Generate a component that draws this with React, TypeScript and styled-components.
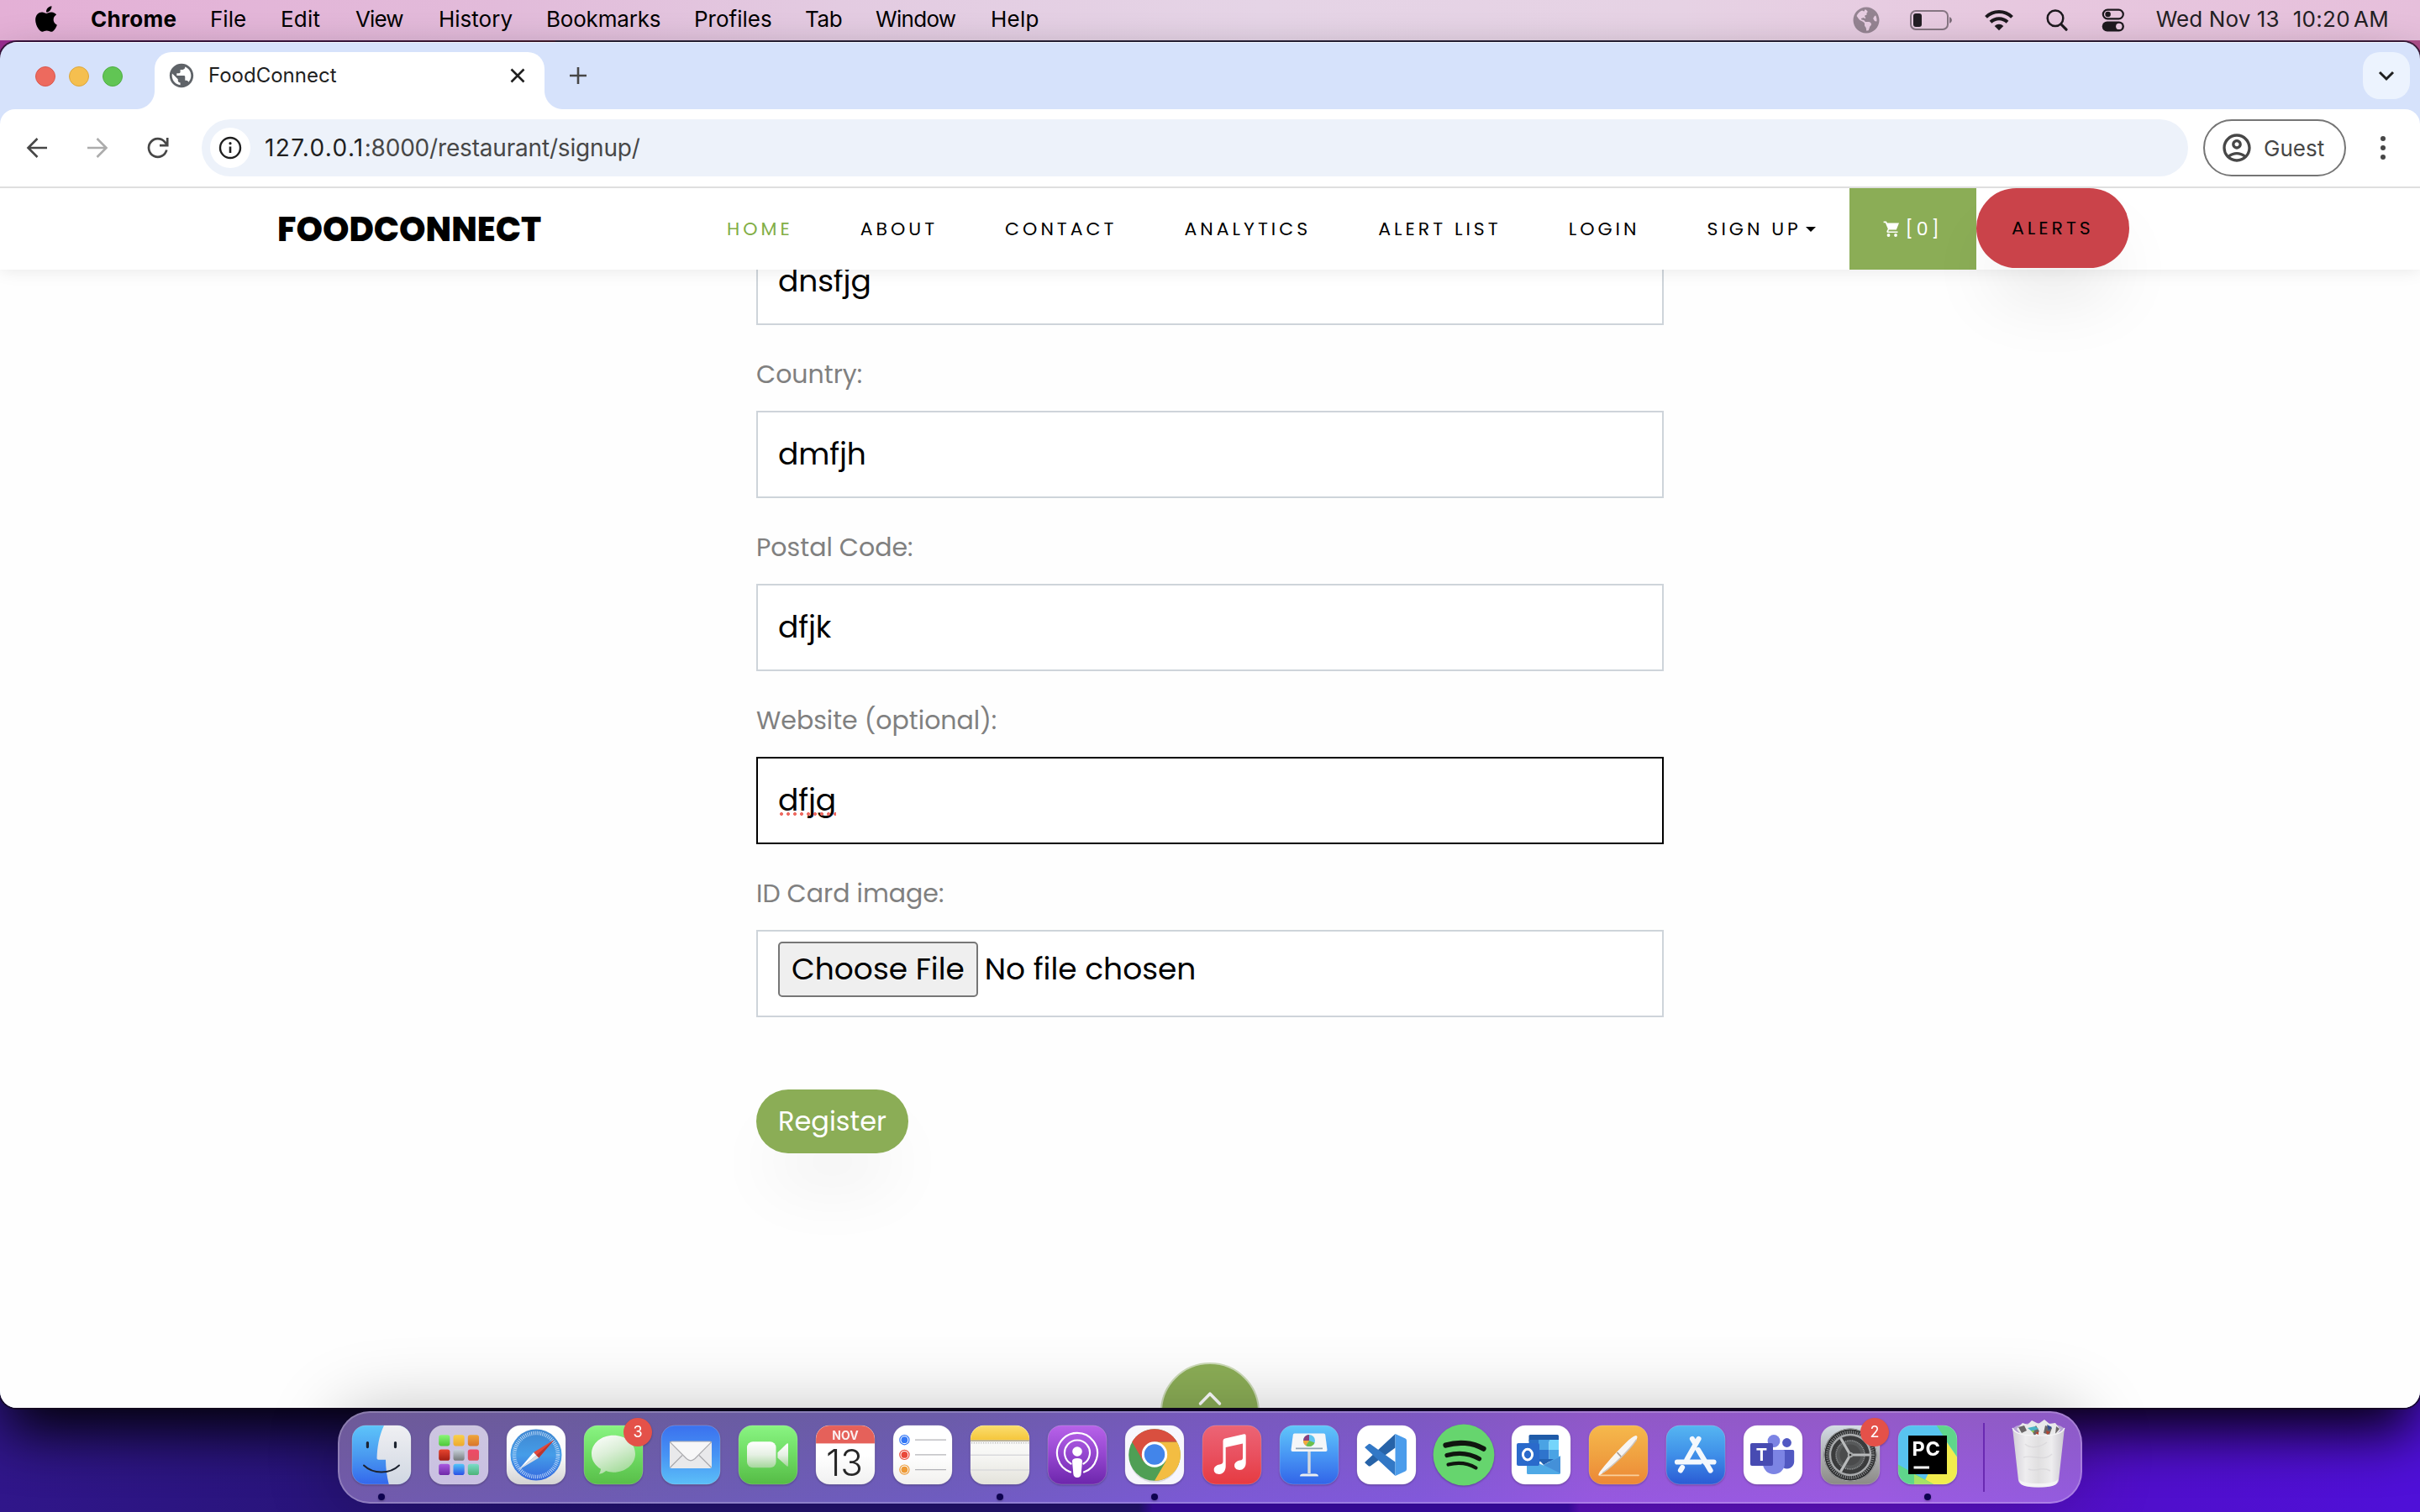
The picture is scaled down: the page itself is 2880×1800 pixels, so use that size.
import React from "react";
import styled, { createGlobalStyle } from "styled-components";
import { FaApple, FaGlobeAmericas } from "react-icons/fa";
import { MdPublic, MdOutlineAccountCircle } from "react-icons/md";

const UI = `Inter, "Liberation Sans", sans-serif`;
const BRAND = `Poppins, Inter, sans-serif`;
const GREEN = "#8bad56";

const GlobalStyle = createGlobalStyle`
  *, *::before, *::after { box-sizing: border-box; }
  html, body { margin: 0; padding: 0; overflow: hidden; }
  svg { display: block; }
`;

const Desktop = styled.div`
  width: 2880px;
  height: 1800px;
  overflow: hidden;
  display: flex;
  flex-direction: column;
  font-family: ${UI};
  background:
    linear-gradient(90deg, #9b2d92 0, #a03090 430px, #b0405c 560px, #b8484f 660px, #5a6070 662px, #5a6070 2230px, #7a4a70 2600px, #b0508c 2880px) 0 0 / 100% 300px no-repeat,
    linear-gradient(90deg, #30168a 0, #28147a 400px, #231270 800px, #22126c 1355px, #3a0ba2 1372px, #3a0ba8 1866px, #5b10bc 1880px, #5e12c0 2200px, #500fcc 2560px, #4f10d8 2880px);
`;

/* ---------- menu bar ---------- */

const MenuBar = styled.header`
  flex: none;
  height: 48px;
  padding: 0 37px 3px 38px;
  display: flex;
  align-items: center;
  color: #000;
  font-size: 26px;
  background: linear-gradient(90deg, #e4b0d6 0, #e2bbda 600px, #e3cbe1 1000px, #e5d4e6 1500px, #e6d2e4 2000px, #e7c8df 2400px, #e6bfdb 2880px);
`;

const AppleMark = styled(FaApple)`
  flex: none;
  width: 34px;
  height: 35px;
  margin-right: 36px;
`;

const MenuItem = styled.span<{ $w: number; $bold?: boolean; $ls?: number }>`
  flex: none;
  width: ${(p) => p.$w}px;
  white-space: nowrap;
  font-weight: ${(p) => (p.$bold ? 700 : 400)};
  letter-spacing: ${(p) => p.$ls ?? 0}px;
`;

const StatusArea = styled.div`
  margin-left: auto;
  height: 48px;
  display: flex;
  align-items: center;
  color: #231f24;
  padding-top: 3px;
`;

const StatusIcon = styled.span<{ $mr: number; $faded?: boolean }>`
  display: block;
  margin-right: ${(p) => p.$mr}px;
  opacity: ${(p) => (p.$faded ? 0.42 : 1)};
`;

const Clock = styled.span`
  display: flex;
  gap: 16px;
  padding-bottom: 3px;
  white-space: nowrap;
  letter-spacing: 0.1px;
`;

const Time = styled.span`
  word-spacing: -3.5px;
  letter-spacing: 0.3px;
`;

/* ---------- browser window ---------- */

const BrowserWindow = styled.main`
  flex: none;
  height: 1626px;
  margin-top: 2px;
  display: flex;
  flex-direction: column;
  border-radius: 20px;
  overflow: hidden;
  background: #d6e2fb;
  box-shadow: 0 0 0 2px rgba(20, 10, 30, 0.75), 0 36px 66px -8px rgba(0, 0, 0, 0.95);
`;

const TabStrip = styled.div`
  flex: none;
  height: 80px;
  padding: 12px 12px 0 42px;
  display: flex;
  border-top: 1px solid #f1f5fe;
`;

const TrafficLights = styled.div`
  display: flex;
  gap: 16px;
  padding-top: 16px;
  margin-right: 38px;
`;

const Light = styled.i<{ $c: string; $b: string }>`
  width: 24px;
  height: 24px;
  border-radius: 50%;
  background: ${(p) => p.$c};
  border: 1px solid ${(p) => p.$b};
`;

const Tab = styled.div`
  position: relative;
  width: 464px;
  height: 68px;
  margin-top: -1px;
  padding: 0 22px 12px 18px;
  display: flex;
  align-items: center;
  background: #fff;
  border-radius: 20px 20px 0 0;
  color: #1f1f1f;
  &::before,
  &::after {
    content: "";
    position: absolute;
    bottom: 0;
    width: 22px;
    height: 22px;
  }
  &::before {
    left: -22px;
    background: radial-gradient(circle at 0 0, transparent 21.5px, #fff 22.5px);
  }
  &::after {
    right: -22px;
    background: radial-gradient(circle at 100% 0, transparent 21.5px, #fff 22.5px);
  }
`;

const Favicon = styled(MdPublic)`
  width: 34px;
  height: 34px;
  margin-left: -3px;
  color: #5f6368;
`;

const TabTitle = styled.span`
  flex: 1;
  margin-left: 15px;
  padding-bottom: 2px;
  font-size: 24px;
`;

const NewTab = styled.div`
  margin: 16px 0 0 29px;
`;

const TabSearch = styled.div`
  width: 56px;
  height: 56px;
  margin: -1px 0 0 auto;
  display: grid;
  place-items: center;
  border-radius: 20px;
  background: #ecf3fe;
`;

const Toolbar = styled.div`
  flex: none;
  height: 94px;
  display: flex;
  align-items: center;
  padding: 0 36px 0 30px;
  background: #fff;
  border-radius: 18px 18px 0 0;
  border-bottom: 2px solid #dfdfdf;
`;

const ToolButton = styled.span<{ $mr: number }>`
  margin-right: ${(p) => p.$mr}px;
`;

const Omnibox = styled.div`
  width: 2364px;
  height: 68px;
  display: flex;
  align-items: center;
  padding-left: 10px;
  border-radius: 34px;
  background: #edf2fa;
`;

const SiteInfo = styled.span`
  width: 48px;
  height: 48px;
  display: grid;
  place-items: center;
  border-radius: 50%;
  background: #fff;
`;

const Url = styled.span`
  margin-left: 17px;
  font-size: 28px;
  color: #474747;
  white-space: nowrap;
  letter-spacing: -0.18px;
  b {
    font-weight: 400;
    color: #1f1f1f;
    letter-spacing: 1.35px;
  }
`;

const Guest = styled.div`
  width: 170px;
  height: 68px;
  margin: 0 41px 0 18px;
  padding-left: 18px;
  display: flex;
  align-items: center;
  gap: 12px;
  border: 2px solid #757575;
  border-radius: 34px;
  font-size: 26px;
  color: #474747;
`;

const MoreDots = styled.div`
  display: flex;
  flex-direction: column;
  gap: 5px;
  i {
    width: 6px;
    height: 6px;
    border-radius: 50%;
    background: #474747;
  }
`;

/* ---------- web page ---------- */

const Page = styled.div`
  flex: 1;
  position: relative;
  overflow: hidden;
  background: #fefefe;
  font-family: ${BRAND};
`;

const Nav = styled.nav`
  position: relative;
  z-index: 1;
  height: 97px;
  padding: 0 346px 0 330px;
  display: flex;
  align-items: stretch;
  background: #fff;
  box-shadow: 0 0 20px rgba(0, 0, 0, 0.1);
`;

const Brand = styled.div`
  width: 495px;
  line-height: 98px;
  font-size: 40px;
  font-weight: 800;
  color: #000;
`;

const NavLink = styled.a<{ $active?: boolean; $filled?: boolean }>`
  display: flex;
  align-items: center;
  padding: 0 40px;
  font-size: 22px;
  letter-spacing: 4px;
  white-space: nowrap;
  color: ${(p) => (p.$filled ? "#fff" : p.$active ? "#82ae46" : "#000")};
  background: ${(p) => (p.$filled ? GREEN : "transparent")};
`;

const Caret = styled.i`
  margin-left: 5.6px;
  border: 6.6px solid transparent;
  border-top-color: currentColor;
  border-bottom: 0;
`;

const CartCount = styled.span`
  margin-left: 4px;
`;

const AlertsButton = styled.button`
  width: 182px;
  height: 95px;
  padding: 0 0 1px;
  border: 0;
  border-radius: 48px;
  background: #ca434a;
  color: #000;
  font: 400 22px ${BRAND};
  letter-spacing: 4px;
  box-shadow: 0 48px 84px -18px rgba(0, 0, 0, 0.1);
`;

const Form = styled.form`
  width: 1080px;
  margin: -38px auto 0;
  display: flex;
  flex-direction: column;
`;

const Label = styled.label`
  margin: 32px 0 16px;
  font-size: 30px;
  line-height: 54px;
  color: #808080;
`;

const Input = styled.div<{ $focus?: boolean }>`
  height: 104px;
  padding: 0 24px;
  display: flex;
  align-items: center;
  border: 2px solid ${(p) => (p.$focus ? "#000" : "#ced4da")};
  background: #fff;
  color: #000;
  font-size: 36px;
  line-height: 54px;
  letter-spacing: -0.1px;
`;

const Misspelled = styled.span`
  position: relative;
  &::after {
    content: "";
    position: absolute;
    left: 0;
    right: 0;
    top: 41px;
    height: 4px;
    background: radial-gradient(circle, #ee6a61 1.6px, transparent 2.3px) 0 0 / 8px 4px;
  }
`;

const FileInput = styled(Input)`
  align-items: flex-start;
  padding-top: 12px;
  gap: 8px;
`;

const ChooseFile = styled.span`
  height: 66px;
  padding: 4px 14px;
  border: 2px solid #767676;
  border-radius: 5px;
  background: #efefef;
  letter-spacing: 0;
`;

const FileName = styled.span`
  padding-top: 6px;
  letter-spacing: 0;
`;

const Register = styled.button`
  width: 181px;
  height: 76px;
  margin-top: 86px;
  padding: 0;
  border: 0;
  border-radius: 38px;
  background: ${GREEN};
  color: #fff;
  font: 400 32px ${BRAND};
  box-shadow: 0 48px 84px -18px rgba(0, 0, 0, 0.085);
`;

const ScrollTop = styled.div`
  position: absolute;
  left: 1381px;
  top: 1398px;
  width: 118px;
  height: 118px;
  display: grid;
  justify-items: center;
  padding-top: 32px;
  border-radius: 50%;
  border: 2px solid #cddbb8;
  background: ${GREEN};
`;

/* ---------- dock ---------- */

const Dock = styled.footer`
  position: relative;
  flex: none;
  width: 2076px;
  height: 110px;
  margin: 4px 0 0 402px;
  padding: 14px 14px 0;
  display: flex;
  gap: 20px;
  border: 2px solid rgba(255, 255, 255, 0.22);
  border-radius: 38px;
  background:
    linear-gradient(180deg, rgba(90, 90, 90, 0.2), rgba(110, 90, 230, 0.12)),
    linear-gradient(90deg, #725aa6 0, #6d5cb0 20%, #6f5cbc 35%, #7e59d4 50%, #8558da 62%, #9c58e0 72%, #a15ae2 88%, #995bde 100%);
  background-origin: border-box;
  box-shadow: 0 0 84px rgba(0, 0, 0, 0.25);
`;

const DockItem = styled.div<{ $running?: boolean }>`
  position: relative;
  flex: none;
  width: 72px;
  height: 72px;
  filter: drop-shadow(0 1px 1px rgba(0, 0, 0, 0.3));
  &::after {
    content: "";
    display: ${(p) => (p.$running ? "block" : "none")};
    position: absolute;
    left: 32px;
    top: 82px;
    width: 8px;
    height: 8px;
    border-radius: 50%;
    background: #0e0350;
  }
`;

const Badge = styled.span`
  position: absolute;
  left: 48px;
  top: -8px;
  width: 34px;
  height: 34px;
  border-radius: 50%;
  background: #e45149;
  color: #fff;
  font-size: 18px;
  line-height: 34px;
  text-align: center;
`;

const Divider = styled.i`
  width: 2px;
  height: 82px;
  margin: -2px 8px 0 10px;
  background: #6a2ab2;
`;

const TrashSlot = styled.div`
  margin-top: -7px;
  height: 84px;
`;

const Grad = ({ id, stops, x2 = 0, y2 = 1 }: { id: string; stops: string[]; x2?: number; y2?: number }) => (
  <linearGradient id={id} x1="0" y1="0" x2={x2} y2={y2}>
    {stops.map((c, i) => (
      <stop key={i} offset={i / (stops.length - 1)} stopColor={c} />
    ))}
  </linearGradient>
);

const Tile = ({ id, stops, children }: { id: string; stops: string[]; children?: React.ReactNode }) => (
  <svg width="72" height="72" viewBox="0 0 72 72" overflow="visible">
    <defs>
      <Grad id={id} stops={stops} />
      <clipPath id={id + "-clip"}>
        <rect x="1" y="1" width="70" height="70" rx="16" />
      </clipPath>
    </defs>
    <g clipPath={`url(#${id}-clip)`}>
      <rect width="72" height="72" fill={`url(#${id})`} />
      {children}
    </g>
    <rect x="0.9" y="0.9" width="70.2" height="70.2" rx="16" fill="none" stroke="#fff" strokeOpacity="0.28" strokeWidth="0.8" />
  </svg>
);

const Finder = () => (
  <Tile id="finder" stops={["#5ec6fa", "#4a9bf0", "#3366ec"]}>
    <defs>
      <Grad id="finder-r" stops={["#f0f0f3", "#d0d7e2"]} />
    </defs>
    <path d="M39.5 0C33 13 31 27 30.5 40q0 1.8 1.8 1.8H41C41 52 42.5 62 45 72h27V0z" fill="url(#finder-r)" />
    <g fill="none" stroke="#1d2330" strokeLinecap="round">
      <path d="M19.4 21.6v5M52.5 21.6v5" strokeWidth="3.2" />
      <path d="M15 48.5c11 10.6 31 10.6 42 0" strokeWidth="2" />
    </g>
  </Tile>
);

const LAUNCH = [
  ["#8bf578", "#4fc83a"], ["#f8d04b", "#eea92f"], ["#efa63a", "#d9752c"],
  ["#e8452f", "#a21d14"], ["#c9d2dc", "#777b7d"], ["#ef4a68", "#e0525f"],
  ["#a95ae0", "#6e28a8"], ["#52c4f8", "#2c50e6"], ["#7adcc9", "#4db378"],
];

const Launchpad = () => (
  <Tile id="lp" stops={["#cdc6e0", "#c9c0e2"]}>
    {LAUNCH.map((c, i) => (
      <React.Fragment key={i}>
        <defs>
          <Grad id={"lp" + i} stops={c} />
        </defs>
        <rect x={12.2 + (i % 3) * 17.3} y={12.2 + Math.floor(i / 3) * 17.3} width="13.2" height="13.2" rx="2.8" fill={`url(#lp${i})`} />
      </React.Fragment>
    ))}
  </Tile>
);

const Safari = () => (
  <Tile id="saf" stops={["#ffffff", "#fbfbfb", "#d2d2d2"]}>
    <defs>
      <Grad id="saf-b" stops={["#3f86d0", "#459de8", "#3468de"]} />
    </defs>
    <circle cx="36" cy="36" r="30.5" fill="url(#saf-b)" />
    <circle cx="36" cy="36" r="26" fill="none" stroke="#d3e6fb" strokeWidth="4.6" strokeDasharray="0.95 1.32" opacity="0.85" />
    <path d="M57.5 18 39.2 39.6 33 33z" fill="#e2493c" />
    <path d="M57.5 18 39.2 39.6 36.2 36.4z" fill="#b93630" />
    <path d="M15 54 33 33l3.2 3.4z" fill="#fff" />
    <path d="M15 54 39.2 39.6l-3-3.2z" fill="#d9dde2" />
  </Tile>
);

const Messages = () => (
  <Tile id="msg" stops={["#8af583", "#6edb63", "#58bd48"]}>
    <defs>
      <Grad id="msg-b" stops={["#ffffff", "#dcefd8", "#a9dda0"]} x2={0.5} />
    </defs>
    <path d="M36 12.7c-14.500 0-26 9.600-26 22 0 7.500 4.200 14 11 18-.3 2.500-1 4.500-2.200 6 3.500-.4 6.200-1.600 8.400-3.600 2.800.9 5.700 1.600 8.800 1.600 14.500 0 26-9.600 26-22s-11.500-22-26-22z" fill="url(#msg-b)" />
  </Tile>
);

const Mail = () => (
  <Tile id="mail" stops={["#3a70ee", "#4793f4", "#5cc0f8"]}>
    <rect x="11" y="20" width="50" height="32" rx="2.5" fill="#e9e9eb" />
    <path d="M11.5 51 26 36.5M60.5 51 46 36.5" stroke="#a9a9ad" strokeWidth="1.2" />
    <path d="M11.5 20.8 31 40.5q5 4.6 10 0L60.500 20.800q-1-.8-2-.8h-45q-1 0-2 .8z" fill="#f7f7f8" stroke="#acacb0" strokeWidth="1.2" />
  </Tile>
);

const FaceTime = () => (
  <Tile id="ft" stops={["#8af583", "#6edb63", "#55bb45"]}>
    <defs>
      <Grad id="ft-b" stops={["#ffffff", "#e6f0e4", "#a5d79b"]} />
    </defs>
    <rect x="11" y="20.3" width="34.5" height="31" rx="7" fill="url(#ft-b)" />
    <path d="M47.4 33.2 58.500 22.600Q60 21.600 60 23.500v25q0 2-1.500 1L47.400 39.400z" fill="url(#ft-b)" />
  </Tile>
);

const Calendar = () => (
  <Tile id="cal" stops={["#ffffff", "#ffffff", "#f0f0f0"]}>
    <rect width="72" height="22.4" fill="#e5615a" />
    <text x="36" y="17.5" textAnchor="middle" fontFamily="Inter, sans-serif" fontSize="14" fontWeight="700" fill="#fbeeee">NOV</text>
    <text x="35" y="60.5" textAnchor="middle" fontFamily="Inter, sans-serif" fontSize="44" fontWeight="300" fill="#262626">13</text>
  </Tile>
);

const Reminders = () => (
  <Tile id="rem" stops={["#ffffff", "#ffffff", "#f1f0ee"]}>
    {["#3478f6", "#e9483b", "#ee9a35"].map((c, i) => (
      <g key={c} transform={`translate(0 ${18.2 + i * 17.7})`}>
        <circle cx="14.4" r="5.6" fill="none" stroke={c} strokeWidth="1.2" />
        <circle cx="14.4" r="3.9" fill={c} />
        <path d="M27 0h37" stroke="#b3b3b8" strokeWidth="1.2" />
      </g>
    ))}
  </Tile>
);

const Notes = () => (
  <Tile id="notes" stops={["#fcfcfb", "#f7f7f5", "#e3e2da"]}>
    <defs>
      <Grad id="notes-y" stops={["#fbdf72", "#f5c63b"]} />
    </defs>
    <rect width="72" height="18.5" fill="url(#notes-y)" />
    <path d="M0 19.2h72" stroke="#a9a18a" strokeWidth="1.6" />
    <path d="M2 21.8h70" stroke="#b9b9b9" strokeWidth="1.6" strokeDasharray="1.2 1.6" />
    <path d="M0 36.2h72M0 54h72" stroke="#d9d9dc" strokeWidth="1.5" />
  </Tile>
);

const Podcasts = () => (
  <Tile id="pod" stops={["#b963ea", "#9446cf", "#6c25ab"]}>
    <g fill="none" stroke="#fff" strokeWidth="2.2" strokeLinecap="round">
      <path d="M28 56.5a24 24 0 1 1 16 0" />
      <path d="M28.5 46.5a15 15 0 1 1 15 0" />
    </g>
    <circle cx="36" cy="32" r="5.8" fill="#fff" />
    <path d="M30 43.5q0-3.500 6-3.500t6 3.500l-1.400 15.500q-.6 4-4.600 4t-4.600-4z" fill="#fff" />
  </Tile>
);

const Chrome = () => (
  <Tile id="chr" stops={["#f8f7fd", "#f6f5fc"]}>
    <circle cx="36" cy="39" r="30" opacity="0.1" />
    <circle cx="36" cy="36" r="30.8" fill="#4f9f55" />
    <path d="M36 20.5h26.700A30.800 30.800 0 0 1 36 66.800L49.400 43.700z" fill="#f3bd42" />
    <path d="M9.300 20.600A30.800 30.800 0 0 1 62.700 20.600H36L22.600 43.700z" fill="#d94f3f" />
    <circle cx="36" cy="35.5" r="15.2" fill="#fff" />
    <circle cx="36" cy="35.5" r="12.2" fill="#4285ea" />
  </Tile>
);

const Music = () => (
  <Tile id="mus" stops={["#ec6576", "#e9505f", "#e63a40"]}>
    <path d="M25.5 19.3q0-2.300 2.200-2.800l22.800-5.300q2.200-.4 2.200 1.700v32.300c0 5-3 8.800-7.600 8.800-3.300 0-6-2-6-5.200 0-3.400 2.600-5.400 6.600-6.200 2.700-.5 3.300-1.300 3.300-3.400V22.400l-20.300 4.600v22.500c0 5-3 9.500-7.900 9.500-3.500 0-6.100-2-6.100-5.200 0-3.400 2.600-5.400 6.600-6.200 3-.6 4.200-1.400 4.200-3.800z" fill="#fff" />
  </Tile>
);

const Keynote = () => (
  <Tile id="key" stops={["#61c8fa", "#4896f4", "#3163e8"]}>
    <path d="M34.3 31h3.400v27h-3.400z" fill="#d5d9de" />
    <path d="M25 61.5q0-3 4-3h14q4 0 4 3z" fill="#eceef0" />
    <path d="M18.5 10.5h35q1.500 0 1.700 1.500l2.300 18q.2 2-1.800 2H16.300q-2 0-1.800-2l2.300-18q.2-1.500 1.700-1.500z" fill="#f4f6f8" />
    <path d="M20 28.3h32" stroke="#8fa3b5" strokeWidth="1.8" />
    <circle cx="36" cy="19" r="7" fill="#5ec4ef" />
    <path d="M36 19v7a7 7 0 0 0 6.500-4.500z" fill="#6cc04a" />
    <path d="M36 19 32 25a7 7 0 0 0 4 1z" fill="#6cc04a" />
    <path d="M36 19h-7a7 7 0 0 0 3 6z" fill="#f2a93b" />
    <path d="M36 19v-7a7 7 0 0 0-7 7z" fill="#8a3f7d" />
  </Tile>
);

const VSCode = () => (
  <Tile id="vsc" stops={["#ffffff", "#ffffff"]}>
    <path d="M10.5 44.5 46.5 11v16.500L17 49.200q-1.500.8-2.600-.2l-3.700-3.200q-.8-.6-.2-1.300z" fill="#2763a8" />
    <path d="M10.5 27.5 46.5 61V44.500L17 23.200q-1.500-.8-2.600.2l-3.700 3q-.8.5-.2 1.100z" fill="#3278c6" />
    <path d="M46.5 11 58.500 16.600q1.500.8 1.500 2.400v34q0 1.600-1.500 2.400L46.500 61z" fill="#4b9ceb" />
  </Tile>
);

const Spotify = () => (
  <svg width="72" height="72" viewBox="0 0 72 72" overflow="visible">
    <circle cx="36" cy="36" r="36.4" fill="#66d56e" />
    <g fill="none" stroke="#10160f" strokeLinecap="round">
      <path d="M14.5 24.500c15-4.500 32-3.500 45 4.200" strokeWidth="6.2" />
      <path d="M16 36.5c14-4 27-2.500 38.500 4.200" strokeWidth="5.2" />
      <path d="M17.5 47.5c11.500-3 23-2 33 4" strokeWidth="4.2" />
    </g>
  </svg>
);

const Outlook = () => (
  <Tile id="out" stops={["#ffffff", "#ffffff"]}>
    <rect x="21.5" y="12" width="35.5" height="8" rx="1.5" fill="#1f5ba8" />
    <path d="M21.5 18H33v12H21.500z" fill="#2a6fc6" />
    <path d="M33 18h12.500v12H33z" fill="#4aa3e4" />
    <path d="M45.5 18H57v12H45.500z" fill="#74d5fb" />
    <path d="M21.5 30H33v14H21.500z" fill="#1f5ba8" />
    <path d="M33 30h12.500v14H33z" fill="#2f74cc" />
    <path d="M45.5 30H57v14H45.500z" fill="#4aa3e4" />
    <path d="M19 40l20 8.500L59 37v20.500q0 1.500-1.500 1.500h-37q-1.500 0-1.500-1.500z" fill="#4fa9e6" />
    <path d="M33 41h18l-12 7z" fill="#2360b0" />
    <path d="M39 48 59 38v20z" fill="#4490d8" />
    <rect x="7" y="22" width="27" height="27" rx="2" fill="#2a6acb" />
    <ellipse cx="20" cy="35.6" rx="5.6" ry="6.3" fill="none" stroke="#fff" strokeWidth="3" />
  </Tile>
);

const Pages = () => (
  <Tile id="pag" stops={["#f6b94c", "#f0a241", "#ec8736"]}>
    <path d="M14 60.3h46" stroke="#f9cf9c" strokeWidth="1.8" strokeLinecap="round" />
    <path d="M12.5 60.5q-.8-.8 1.500-4.500C21 47 32 34 45 21.500 50 16.500 54.500 13.300 57 13q2.500.4.800 4.200C53 25 44 35 35 43.500 27 51 20 56.500 15.500 59q-2.300 1.800-3 1.500z" fill="#f7f5f3" />
    <path d="M34.5 33l5 5.500" stroke="#a59a90" strokeWidth="1.8" />
    <path d="M17 57.5C28 50 48 32 57.500 18" stroke="#c9c3bd" strokeWidth="1.4" fill="none" />
  </Tile>
);

const AppStore = () => (
  <Tile id="as" stops={["#56b7f2", "#3f8fe8", "#2a5ad4"]}>
    <g stroke="#f4f8fd" strokeWidth="6.2" strokeLinecap="round">
      <path d="M14 44.5h27M47 44.5h10.500" />
      <path d="M39.5 17 25.500 41.500M20 51l-2 3.400M32 17l3 5M39 30l14.600 24.600" />
    </g>
  </Tile>
);

const Teams = () => (
  <Tile id="tm" stops={["#ffffff", "#ffffff"]}>
    <circle cx="52.5" cy="21.5" r="5.4" fill="#5158c2" />
    <path d="M48 30h11.500q1.700 0 1.700 1.700V44a8.500 8.500 0 0 1-13.200 7z" fill="#5158c2" />
    <circle cx="37" cy="19.5" r="7.4" fill="#7c84e4" />
    <path d="M24 30h24q2 0 2 2v14a13 13 0 0 1-26 0z" fill="#7c84e4" />
    <rect x="9" y="22" width="27" height="27" rx="2" fill="#474bb2" />
    <text x="22.5" y="43" textAnchor="middle" fontFamily="Inter, sans-serif" fontSize="20" fontWeight="700" fill="#fff">T</text>
  </Tile>
);

const Settings = () => (
  <Tile id="set" stops={["#d5dde6", "#aeb0b2", "#8a8985"]}>
    <circle cx="36" cy="36" r="31.5" fill="#2c2d2e" />
    <circle cx="36" cy="36" r="31" fill="none" stroke="#b7b9ba" strokeWidth="0.9" />
    <circle cx="36" cy="36" r="27" fill="none" stroke="#85888a" strokeWidth="4" strokeDasharray="1.1 1.4" />
    <circle cx="36" cy="36" r="24" fill="#3a3b3c" stroke="#a9abad" strokeWidth="2.4" />
    <circle cx="36" cy="36" r="17" fill="#57595a" stroke="#8f9294" strokeWidth="1.6" strokeDasharray="1.2 0.9" />
    <circle cx="36" cy="36" r="12.5" fill="#4a4b4c" />
    <path d="M36 36h23M36 36 24.500 16M36 36 24.500 56" stroke="#b9bbbc" strokeWidth="3.2" />
    <circle cx="36" cy="36" r="3.2" fill="#a6a8a9" />
    <circle cx="36" cy="36" r="1.3" fill="#333" />
  </Tile>
);

const PyCharm = () => (
  <Tile id="pc" stops={["#58c3f0", "#58c3f0"]}>
    <path d="M46 0h26v40z" fill="#5fd68b" />
    <path d="M57 18 72 40v32H30z" fill="#f1ec4d" />
    <path d="M0 47 45 72H0z" fill="#5fd68b" />
    <path d="M20 59l25 13H20z" fill="#a6e266" />
    <rect x="13" y="13" width="46" height="46" fill="#000" />
    <text x="17.4" y="36.5" fontFamily="Inter, sans-serif" fontSize="23.5" fontWeight="700" fill="#fff" textLength="33.5">PC</text>
    <path d="M19.5 49.5H38v3H19.500z" fill="#fff" />
  </Tile>
);

const Trash = () => (
  <svg width="72" height="84" viewBox="0 0 72 84" overflow="visible">
    <defs>
      <Grad id="tr" stops={["#d2cfd6", "#eeedef", "#e0dfe0", "#eeedef", "#cbc8d0"]} x2={1} y2={0} />
    </defs>
    <ellipse cx="36" cy="13" rx="31" ry="8" fill="#b9a6d6" />
    <path d="M10 12 17 5l6 2 5-5 8 4 7-5 6 5 7-1 6 8-4 6-23 3-20-3z" fill="#e9e9ea" />
    <path d="M12 10l7-2 3 6-6 3zM28 14l5-6 4 7-6 5zM44 8l8 3-3 8-7-2zM57 9l4 3-5 6z" fill="#6b6768" />
    <path d="M23 11l9-2 4 3-8 3z" fill="#49b3c4" />
    <path d="M27 14l4 0-1 3z" fill="#8bc34a" />
    <path d="M46 7l6 3-4 4z" fill="#35508f" />
    <path d="M45 14l5 2-4 3zM32 17l4-2v4z" fill="#b5442f" />
    <path d="M5 10.5c4 8 16 9 31 9s27-1 31-9L60 73q-1 8.500-24 8.500T12 73z" fill="url(#tr)" />
    <path d="M5 11c3 8 16 9 31 9s28-1 31-9" fill="none" stroke="#f7f6f8" strokeWidth="1.2" />
    <path d="M13 72q3 5 23 5t23-5l-.8 4q-2 5.500-22.200 5.500T14 76z" fill="#f8f8f9" opacity="0.8" />
    <path d="M20 30c6 6 18 4 26-2M18 46c10-4 24 6 34-4M24 60c8 4 16-4 26 2" stroke="#d4d2d5" strokeWidth="1.5" fill="none" opacity="0.6" />
  </svg>
);

const DOCK: { key: string; Icon: React.FC; running?: boolean; badge?: string }[] = [
  { key: "finder", Icon: Finder, running: true },
  { key: "launchpad", Icon: Launchpad },
  { key: "safari", Icon: Safari },
  { key: "messages", Icon: Messages, badge: "3" },
  { key: "mail", Icon: Mail },
  { key: "facetime", Icon: FaceTime },
  { key: "calendar", Icon: Calendar },
  { key: "reminders", Icon: Reminders },
  { key: "notes", Icon: Notes, running: true },
  { key: "podcasts", Icon: Podcasts },
  { key: "chrome", Icon: Chrome, running: true },
  { key: "music", Icon: Music },
  { key: "keynote", Icon: Keynote },
  { key: "vscode", Icon: VSCode },
  { key: "spotify", Icon: Spotify },
  { key: "outlook", Icon: Outlook },
  { key: "pages", Icon: Pages },
  { key: "appstore", Icon: AppStore },
  { key: "teams", Icon: Teams },
  { key: "settings", Icon: Settings, badge: "2" },
  { key: "pycharm", Icon: PyCharm, running: true },
];

/* ---------- small glyphs ---------- */

const Battery = () => (
  <svg width="50" height="24" viewBox="0 0 50 24">
    <rect x="1" y="1" width="44" height="22" rx="6" fill="none" stroke="#231f24" strokeOpacity="0.5" strokeWidth="2" />
    <rect x="4" y="4" width="10" height="16" rx="3" fill="#231f24" />
    <path d="M47 8q3 1.500 3 4t-3 4z" fill="#231f24" fillOpacity="0.55" />
  </svg>
);

const Wifi = () => (
  <svg width="34" height="26" viewBox="0 0 34 26" fill="none" stroke="#1d191e" strokeWidth="4">
    <path d="M1.5 9.300a22 22 0 0 1 31 0" />
    <path d="M7 15.300a14.300 14.300 0 0 1 20 0" />
    <path d="M17 25.300l-5.300-5.400a7.600 7.600 0 0 1 10.600 0z" fill="#1d191e" stroke="none" />
  </svg>
);

const Search = () => (
  <svg width="26" height="26" viewBox="0 0 26 26" fill="none" stroke="#1d191e" strokeLinecap="round">
    <circle cx="11" cy="10.8" r="9.3" strokeWidth="2.5" />
    <path d="M18 18l6 6.200" strokeWidth="3.2" />
  </svg>
);

const ControlCenter = () => (
  <svg width="28" height="28" viewBox="0 0 28 28">
    <rect x="1.8" y="1.6" width="24" height="10.8" rx="5.4" fill="none" stroke="#1d191e" strokeWidth="2.2" />
    <circle cx="7.6" cy="7" r="3.3" fill="#1d191e" />
    <rect x="0.7" y="15.4" width="26.2" height="12" rx="6" fill="#1d191e" />
    <circle cx="20.8" cy="21.4" r="3.7" fill="#e7c8df" />
  </svg>
);

const Cart = () => (
  <svg width="22" height="20" viewBox="0 0 22 20" fill="#fff">
    <path d="M.6.4h3.300l1 2H19l-3.200 8.200H7l-.9 1.800h11.400v1.700H5.300Q3.800 13.600 4.500 12l1.300-2.500L2.800 2.200H.6z" />
    <circle cx="6.5" cy="17" r="1.9" />
    <circle cx="15" cy="17" r="1.9" />
  </svg>
);

const FIELDS: { label: string; value: string; focus?: boolean }[] = [
  { label: "Country:", value: "dmfjh" },
  { label: "Postal Code:", value: "dfjk" },
  { label: "Website (optional):", value: "dfjg", focus: true },
];

export default function App() {
  return (
    <Desktop>
      <GlobalStyle />
      <MenuBar>
        <AppleMark />
        <MenuItem $w={142} $bold $ls={0.3}>Chrome</MenuItem>
        <MenuItem $w={84}>File</MenuItem>
        <MenuItem $w={89} $ls={0.2}>Edit</MenuItem>
        <MenuItem $w={99} $ls={-0.9}>View</MenuItem>
        <MenuItem $w={128}>History</MenuItem>
        <MenuItem $w={176} $ls={-0.2}>Bookmarks</MenuItem>
        <MenuItem $w={132}>Profiles</MenuItem>
        <MenuItem $w={84} $ls={-0.4}>Tab</MenuItem>
        <MenuItem $w={137} $ls={-0.7}>Window</MenuItem>
        <MenuItem $w={70} $ls={0.2}>Help</MenuItem>
        <StatusArea>
          <StatusIcon $mr={36} $faded><FaGlobeAmericas size={32} /></StatusIcon>
          <StatusIcon $mr={39}><Battery /></StatusIcon>
          <StatusIcon $mr={39}><Wifi /></StatusIcon>
          <StatusIcon $mr={40}><Search /></StatusIcon>
          <StatusIcon $mr={37}><ControlCenter /></StatusIcon>
          <Clock>
            <span>Wed Nov 13</span>
            <Time>10:20 AM</Time>
          </Clock>
        </StatusArea>
      </MenuBar>

      <BrowserWindow>
        <TabStrip>
          <TrafficLights>
            <Light $c="#ed6a5e" $b="#d9584d" />
            <Light $c="#f5bf4f" $b="#dda73b" />
            <Light $c="#61c554" $b="#4fae43" />
          </TrafficLights>
          <Tab>
            <Favicon />
            <TabTitle>FoodConnect</TabTitle>
            <svg width="20" height="20" viewBox="0 0 20 20" stroke="#1f1f1f" strokeWidth="2.6">
              <path d="M2.5 2.5l15 15M17.500 2.500l-15 15" />
            </svg>
          </Tab>
          <NewTab>
            <svg width="22" height="22" viewBox="0 0 22 22" stroke="#474747" strokeWidth="2.6">
              <path d="M11 1v20M1 11h20" />
            </svg>
          </NewTab>
          <TabSearch>
            <svg width="20" height="14" viewBox="0 0 20 14" fill="none" stroke="#1f1f1f" strokeWidth="3">
              <path d="M2 3l8 8 8-8" />
            </svg>
          </TabSearch>
        </TabStrip>

        <Toolbar>
          <ToolButton $mr={44}>
            <svg width="28" height="28" viewBox="0 0 28 28" fill="none" stroke="#474747" strokeWidth="2.6">
              <path d="M26 14H4M14.500 3 3.500 14l11 11" />
            </svg>
          </ToolButton>
          <ToolButton $mr={43}>
            <svg width="28" height="28" viewBox="0 0 28 28" fill="none" stroke="#acacac" strokeWidth="2.6">
              <path d="M2 14h22M13.500 3l11 11-11 11" />
            </svg>
          </ToolButton>
          <ToolButton $mr={38}>
            <svg width="29" height="28" viewBox="0 0 29 28" fill="none" stroke="#474747" strokeWidth="2.7">
              <path d="M25.3 16.500A10.800 10.800 0 1 1 23 6.900l2.700 3.300" />
              <path d="M26.2 2v9.200H17" />
            </svg>
          </ToolButton>
          <Omnibox>
            <SiteInfo>
              <svg width="28" height="28" viewBox="0 0 28 28">
                <circle cx="14" cy="14" r="12" fill="none" stroke="#1f1f1f" strokeWidth="2.4" />
                <path d="M14 12.500v7.500" stroke="#1f1f1f" strokeWidth="2.6" />
                <circle cx="14" cy="8.7" r="1.6" fill="#1f1f1f" />
              </svg>
            </SiteInfo>
            <Url><b>127.0.0.1</b>:8000/restaurant/signup/</Url>
          </Omnibox>
          <Guest>
            <MdOutlineAccountCircle size={40} />
            <span>Guest</span>
          </Guest>
          <MoreDots><i /><i /><i /></MoreDots>
        </Toolbar>

        <Page>
          <Nav>
            <Brand>FOODCONNECT</Brand>
            <NavLink $active>HOME</NavLink>
            <NavLink>ABOUT</NavLink>
            <NavLink>CONTACT</NavLink>
            <NavLink>ANALYTICS</NavLink>
            <NavLink>ALERT LIST</NavLink>
            <NavLink>LOGIN</NavLink>
            <NavLink>SIGN UP<Caret /></NavLink>
            <NavLink $filled>
              <Cart />
              <CartCount>[0]</CartCount>
            </NavLink>
            <AlertsButton type="button">ALERTS</AlertsButton>
          </Nav>
          <Form>
            <Input>dnsfjg</Input>
            {FIELDS.map((f) => (
              <React.Fragment key={f.label}>
                <Label>{f.label}</Label>
                <Input $focus={f.focus}>{f.focus ? <Misspelled>{f.value}</Misspelled> : f.value}</Input>
              </React.Fragment>
            ))}
            <Label>ID Card image:</Label>
            <FileInput>
              <ChooseFile>Choose File</ChooseFile>
              <FileName>No file chosen</FileName>
            </FileInput>
            <Register type="button">Register</Register>
          </Form>
          <ScrollTop>
            <svg width="30" height="18" viewBox="0 0 30 18" fill="none" stroke="#fff" strokeWidth="3.6" strokeLinecap="round" strokeLinejoin="round">
              <path d="M3.5 15 15 3.200 26.500 15" />
            </svg>
          </ScrollTop>
        </Page>
      </BrowserWindow>

      <Dock>
        {DOCK.map(({ key, Icon, running, badge }) => (
          <DockItem key={key} $running={running}>
            <Icon />
            {badge && <Badge>{badge}</Badge>}
          </DockItem>
        ))}
        <Divider />
        <TrashSlot>
          <Trash />
        </TrashSlot>
      </Dock>
    </Desktop>
  );
}
